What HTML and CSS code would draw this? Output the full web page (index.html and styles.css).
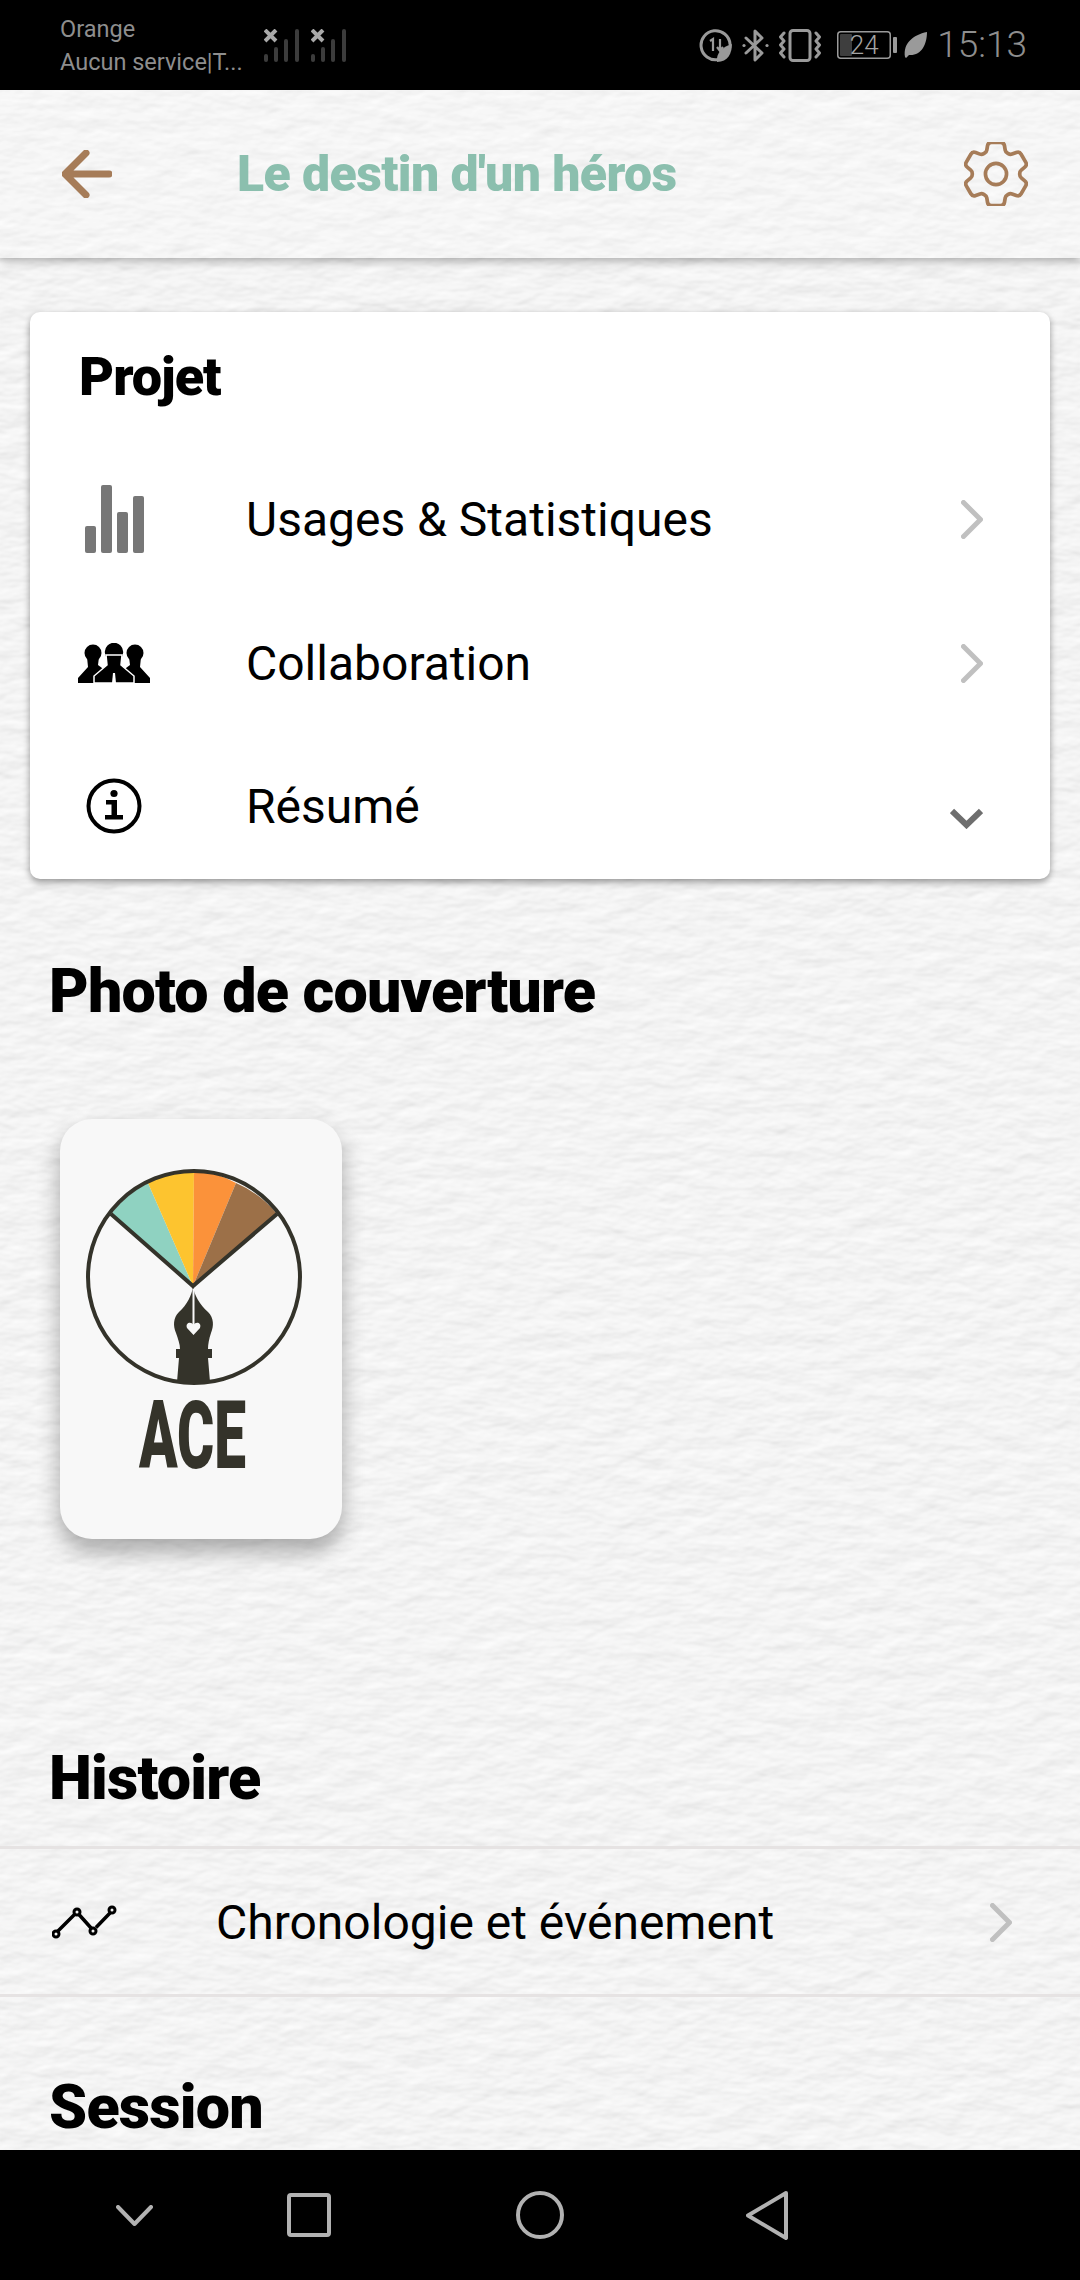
FILE: index.html
```html
<!DOCTYPE html>
<html lang="fr">
<head>
    <meta charset="UTF-8">
    <title>Le destin d'un héros</title>
    <meta name="viewport" content="width=device-width, initial-scale=1">
    <link rel="stylesheet" href="styles.css">
</head>
<body>
    <div class="status-bar">
        <div class="carrier">
            <div>Orange</div>
            <div>Aucun service|T...</div>
        </div>
        <svg class="signal" viewBox="0 0 36 33">
            <g class="signal-bars">
                <rect x="0" y="25" width="4" height="8" rx="2"/><rect x="10" y="18" width="4" height="15" rx="2"/>
                <rect x="20" y="10" width="4" height="23" rx="2"/><rect x="31" y="0" width="4" height="33" rx="2"/>
            </g>
            <path class="signal-x" d="M1 1 L12 12 M12 1 L1 12"/>
        </svg>
        <svg class="signal" viewBox="0 0 36 33">
            <g class="signal-bars">
                <rect x="0" y="25" width="4" height="8" rx="2"/><rect x="10" y="18" width="4" height="15" rx="2"/>
                <rect x="20" y="10" width="4" height="23" rx="2"/><rect x="31" y="0" width="4" height="33" rx="2"/>
            </g>
            <path class="signal-x" d="M1 1 L12 12 M12 1 L1 12"/>
        </svg>
        <div class="status-right">
            <svg class="st-data" viewBox="0 0 33 33">
                <path class="st-line" d="M19 30.5 A14.5 14.5 0 1 1 31 15"/>
                <path class="st-thin" d="M11 12 L14 10 V22 M21 10 V21 M18 18 L21 22 L24 18"/>
                <path class="st-fill" d="M33 15 C33 24 29 33 18 33 C17 24 23 18 33 15 Z"/>
            </svg>
            <svg class="st-bt" viewBox="0 0 27 33">
                <path class="st-line" d="M4 9 L20 24 L13 31 V2 L20 9 L4 24"/>
                <circle class="st-fill" cx="2" cy="16.5" r="1.6"/>
                <circle class="st-fill" cx="25" cy="16.5" r="1.6"/>
            </svg>
            <svg class="st-vibrate" viewBox="0 0 42 33">
                <rect class="st-line" x="11" y="1.5" width="20" height="30" rx="3"/>
                <path class="st-line" d="M5 4 L1.5 8 L5 12 L1.5 16 L5 20 L1.5 24 L5 28"/>
                <path class="st-line" d="M37 4 L40.5 8 L37 12 L40.5 16 L37 20 L40.5 24 L37 28"/>
            </svg>
            <div class="st-battery">
                <svg class="st-battery-svg" viewBox="0 0 90 28">
                    <rect class="st-batt-body" x="0.75" y="0.75" width="52.5" height="26.5" rx="3"/>
                    <rect class="st-batt-level" x="3" y="3" width="12" height="22" rx="1"/>
                    <rect class="st-fill" x="56" y="6" width="4" height="16" rx="1"/>
                    <path class="st-fill" d="M68 26 C66 12 76 4 90 1 C90 14 84 25 72 24 L69 27 Z"/>
                </svg>
                <span class="st-batt-text">24</span>
            </div>
            <span class="st-time">15:13</span>
        </div>
    </div>

    <main class="screen">
        <svg class="paper" width="1080" height="2060">
            <filter id="paperGrain" x="0" y="0" width="100%" height="100%">
                <feTurbulence type="fractalNoise" baseFrequency="0.03 0.06" numOctaves="3" seed="11"/>
                <feDiffuseLighting surfaceScale="1.1" diffuseConstant="1.0" lighting-color="#ffffff">
                    <feDistantLight azimuth="70" elevation="64"/>
                </feDiffuseLighting>
            </filter>
            <rect width="1080" height="2060" filter="url(#paperGrain)"/>
        </svg>

        <header class="top-bar">
            <svg class="back-arrow" viewBox="0 0 50 48">
                <path d="M47 24 H4 M24 3 L3 24 L24 45"/>
            </svg>
            <h1 class="top-title">Le destin d'un héros</h1>
            <svg class="gear" viewBox="2.9 2.9 18.2 18.2">
                <path d="M9.594 3.94c.09-.542.56-.94 1.11-.94h2.593c.55 0 1.02.398 1.11.94l.213 1.281c.063.374.313.686.645.87.074.04.147.083.22.127.325.196.72.257 1.075.124l1.217-.456a1.125 1.125 0 011.37.49l1.296 2.247a1.125 1.125 0 01-.26 1.431l-1.003.827c-.293.241-.438.613-.43.992a7.723 7.723 0 010 .255c-.008.378.137.75.43.991l1.004.827c.424.35.534.955.26 1.43l-1.298 2.247a1.125 1.125 0 01-1.369.491l-1.217-.456c-.355-.133-.75-.072-1.076.124a6.47 6.47 0 01-.22.128c-.331.183-.581.495-.644.869l-.213 1.281c-.09.543-.56.94-1.11.94h-2.594c-.55 0-1.019-.398-1.11-.94l-.213-1.281c-.062-.374-.312-.686-.644-.87a6.52 6.52 0 01-.22-.127c-.325-.196-.72-.257-1.076-.124l-1.217.456a1.125 1.125 0 01-1.369-.49l-1.297-2.247a1.125 1.125 0 01.26-1.431l1.004-.827c.292-.24.437-.613.43-.991a6.932 6.932 0 010-.255c.007-.38-.138-.751-.43-.992l-1.004-.827a1.125 1.125 0 01-.26-1.43l1.297-2.247a1.125 1.125 0 011.37-.491l1.216.456c.356.133.751.072 1.076-.124.072-.044.146-.086.22-.128.332-.183.582-.495.644-.869l.214-1.28z"/>
                <circle cx="12" cy="12" r="3"/>
            </svg>
        </header>

        <section class="card">
            <h2 class="card-title">Projet</h2>
            <div class="card-row">
                <span class="row-icon">
                    <svg class="icon-bars" viewBox="0 0 59 68">
                        <rect x="0" y="41" width="11" height="27" rx="2"/>
                        <rect x="16" y="0" width="11" height="68" rx="2"/>
                        <rect x="32" y="27" width="11" height="41" rx="2"/>
                        <rect x="48" y="11" width="11" height="57" rx="2"/>
                    </svg>
                </span>
                <span class="row-label">Usages &amp; Statistiques</span>
                <svg class="chevron" viewBox="0 0 22 39"><path d="M2.5 2.5 L19.5 19.5 L2.5 36.5"/></svg>
            </div>
            <div class="card-row">
                <span class="row-icon">
                    <svg class="icon-people" viewBox="0 0 72 40">
                        <circle cx="15" cy="10" r="8.5"/>
                        <path d="M9 14 H21 L20 22 L28 28 L20 40 H0 V35 L10 24 Z"/>
                        <circle cx="57" cy="10" r="8.5"/>
                        <path d="M51 14 H63 L62 24 L72 35 V40 H52 L44 28 L52 22 Z"/>
                        <circle class="people-front" cx="36" cy="9" r="10"/>
                        <path class="people-front" d="M28 12 H44 L43 22 L56 33 V40 H16 V33 L29 22 Z"/>
                        <path class="people-tie" d="M35 30 H37 L38 40 H34 Z"/>
                    </svg>
                </span>
                <span class="row-label">Collaboration</span>
                <svg class="chevron" viewBox="0 0 22 39"><path d="M2.5 2.5 L19.5 19.5 L2.5 36.5"/></svg>
            </div>
            <div class="card-row card-row-open">
                <span class="row-icon">
                    <svg class="icon-info" viewBox="0 0 56 56">
                        <circle class="info-ring" cx="28" cy="28" r="25.5"/>
                        <circle cx="28" cy="15.5" r="3.6"/>
                        <path d="M20 22 H31 V37 H37 V41.5 H19 V37 H25.5 V26.5 H20 Z"/>
                    </svg>
                </span>
                <span class="row-label">Résumé</span>
                <svg class="chevron-down" viewBox="0 0 33 21"><path d="M2 3 L16.5 17 L31 3"/></svg>
            </div>
        </section>

        <h2 class="section-title cover-title">Photo de couverture</h2>

        <div class="cover">
            <svg class="cover-logo" viewBox="0 0 282 420">
                <path class="fan-teal" d="M133 167 L51 95 A107 107 0 0 1 88 64 Z"/>
                <path class="fan-yellow" d="M133 167 L88 64 A107 107 0 0 1 134 51 Z"/>
                <path class="fan-orange" d="M133 167 L134 51 A107 107 0 0 1 176 64 Z"/>
                <path class="fan-brown" d="M133 167 L176 64 A107 107 0 0 1 217 95 Z"/>
                <path class="logo-line" d="M51 95 L133 167 L217 95"/>
                <circle class="logo-line" cx="134" cy="158" r="106"/>
                <path class="logo-ink" d="M133 167 C134 176 140 186 148 193 C154 199 154 207 151 214 C149 220 148 225 148 230 H152 V239 H148 L150 263 H117 L119 239 H116 V230 H120 C120 225 118 220 116 214 C113 207 113 199 119 193 C127 186 132 176 133 167 Z"/>
                <path class="logo-slit" d="M133.5 170 V208"/>
                <path class="logo-heart" d="M133.5 216 L127 209 C125 204 131 202 133.5 206 C136 202 142 204 140 209 Z"/>
                <text class="logo-text" x="79" y="349" textLength="107" lengthAdjust="spacingAndGlyphs">ACE</text>
            </svg>
        </div>

        <h2 class="section-title history-title">Histoire</h2>
        <div class="list-row">
            <svg class="icon-trend" viewBox="0 0 65 34">
                <path d="M5.5 26.5 L23 9 M27 9.5 L39.5 23.5 M44 22.5 L58 8"/>
                <circle cx="4" cy="29" r="3"/><circle cx="25" cy="7" r="3"/>
                <circle cx="41" cy="26" r="3"/><circle cx="60" cy="5" r="3"/>
            </svg>
            <span class="list-label">Chronologie et événement</span>
            <svg class="chevron" viewBox="0 0 22 39"><path d="M2.5 2.5 L19.5 19.5 L2.5 36.5"/></svg>
        </div>

        <h2 class="section-title session-title">Session</h2>
    </main>

    <nav class="nav-bar">
        <svg class="nav-down" viewBox="0 0 37 21"><path d="M2 2 L18.5 19 L35 2"/></svg>
        <svg class="nav-square" viewBox="0 0 44 44"><rect x="2" y="2" width="40" height="40" rx="2"/></svg>
        <svg class="nav-circle" viewBox="0 0 48 48"><circle cx="24" cy="24" r="22"/></svg>
        <svg class="nav-back" viewBox="0 0 42 49"><path d="M40 2 L2 24.5 L40 47 Z"/></svg>
    </nav>
</body>
</html>
```

FILE: styles.css
```css
* { box-sizing: border-box; }
html, body { margin: 0; padding: 0; }
body { width: 1080px; height: 2280px; overflow: hidden; display: flex; flex-direction: column; font-family: Roboto, "Liberation Sans", sans-serif; background: #000; }

/* status bar */
.status-bar { height: 90px; flex: none; background: #000; display: flex; align-items: center; padding: 0 53px 0 60px; color: #8e8e8e; }
.carrier { font-size: 23.5px; line-height: 33px; width: 193px; margin-right: 11px; white-space: nowrap; padding-top: 2px; }
.signal { width: 36px; height: 33px; margin-right: 11px; }
.signal-bars rect { fill: #3c3c3c; }
.signal-x { fill: none; stroke: #a9a9a9; stroke-width: 4; }
.status-right { margin-left: auto; display: flex; align-items: center; gap: 10px; }
.st-data { width: 33px; height: 33px; }
.st-bt { width: 27px; height: 33px; }
.st-vibrate { width: 42px; height: 33px; }
.st-line { fill: none; stroke: #9a9a9a; stroke-width: 3; stroke-linejoin: round; stroke-linecap: round; }
.st-thin { fill: none; stroke: #9a9a9a; stroke-width: 2.2; }
.st-fill { fill: #9a9a9a; }
.st-battery { width: 90px; height: 28px; margin-left: 6px; position: relative; }
.st-battery-svg { width: 90px; height: 28px; display: block; }
.st-batt-body { fill: none; stroke: #9a9a9a; stroke-width: 1.5; }
.st-batt-level { fill: #3e3e3e; }
.st-batt-text { position: absolute; left: 0; top: 0; width: 54px; text-align: center; font-size: 26px; line-height: 28px; color: #a4a4a4; font-weight: 300; }
.st-time { font-size: 37px; color: #8e8e8e; font-weight: 300; line-height: 40px; }

/* main area, sits on the paper texture */
.screen { flex: 1; position: relative; overflow: hidden; background: #f3f3f3; }
.screen > * { position: relative; }
.screen > .paper { position: absolute; left: 0; top: 0; display: block; }

.top-bar { height: 168px; display: flex; align-items: center; padding: 0 52px 0 62px; background: rgba(255, 255, 255, 0.2); box-shadow: 0 3px 9px rgba(0, 0, 0, 0.3); }
.back-arrow { width: 50px; height: 48px; margin-right: 125px; }
.back-arrow path { fill: none; stroke: #a67c58; stroke-width: 7; stroke-linecap: round; stroke-linejoin: round; }
.top-title { margin: 0; font-size: 50px; font-weight: 900; color: #8bbfae; letter-spacing: -0.6px; line-height: 56px; }
.gear { width: 64px; height: 64px; margin-left: auto; }
.gear path, .gear circle { fill: none; stroke: #a67c58; stroke-width: 1.05; }

/* project card */
.card { margin: 54px 30px 0; height: 567px; background: #fff; border-radius: 10px; box-shadow: 0 3px 7px rgba(0, 0, 0, 0.4); }
.card-title { margin: 0; height: 134px; padding: 40px 0 0 49px; font-size: 54px; font-weight: 900; line-height: 50px; color: #000; letter-spacing: -1px; }
.card-row { height: 144px; display: flex; align-items: center; padding: 2px 67px 0 48px; }
.card-row-open { padding-top: 0; }
.row-icon { width: 72px; display: flex; justify-content: center; flex: none; margin-right: 96px; }
.row-label { font-size: 48px; color: #000; }
.icon-bars { width: 59px; height: 68px; }
.icon-bars rect { fill: #777; }
.icon-people { width: 72px; height: 40px; }
.icon-people path, .icon-people circle { fill: #000; }
.icon-people .people-front { stroke: #fff; stroke-width: 1.5; }
.icon-people .people-tie { fill: #fff; }
.icon-info { width: 56px; height: 56px; }
.icon-info .info-ring { fill: none; stroke: #000; stroke-width: 4; }
.chevron { width: 22px; height: 39px; margin-left: auto; flex: none; }
.chevron path { fill: none; stroke: #c0c0c0; stroke-width: 5; stroke-linecap: round; stroke-linejoin: round; }
.chevron-down { width: 33px; height: 21px; margin-left: auto; margin-top: 24px; flex: none; }
.chevron-down path { fill: none; stroke: #6e6e6e; stroke-width: 6; }

/* section titles */
.section-title { margin: 0 0 0 49px; font-size: 61px; font-weight: 900; line-height: 64px; color: #000; letter-spacing: -0.8px; }
.cover-title { margin-top: 80px; }
.history-title { margin-top: 207px; }
.session-title { margin-top: 78px; }

/* cover picture */
.cover { width: 282px; height: 420px; margin: 96px 0 0 60px; background: #f8f8f8; border-radius: 32px; box-shadow: 0 12px 22px rgba(0, 0, 0, 0.32); }
.cover-logo { width: 282px; height: 420px; display: block; }
.fan-teal { fill: #8fd2c1; }
.fan-yellow { fill: #fdc42f; }
.fan-orange { fill: #fb923a; }
.fan-brown { fill: #9c7048; }
.logo-line { fill: none; stroke: #34332a; stroke-width: 4; }
.logo-ink { fill: #34332a; }
.logo-slit { fill: none; stroke: #f8f8f8; stroke-width: 2; }
.logo-heart { fill: #f8f8f8; }
.logo-text { font-family: Roboto, sans-serif; font-weight: 900; font-size: 94px; fill: #34332a; }

/* chronology row */
.list-row { height: 151px; margin-top: 36px; display: flex; align-items: center; padding: 2px 68px 0 52px; border-top: 3px solid #e6e3e3; border-bottom: 3px solid #e6e3e3; }
.icon-trend { width: 65px; height: 34px; margin-right: 99px; flex: none; margin-top: -2px; }
.icon-trend path { fill: none; stroke: #000; stroke-width: 3.5; }
.icon-trend circle { fill: none; stroke: #000; stroke-width: 3; }
.list-label { font-size: 48px; color: #000; }

/* navigation bar */
.nav-bar { height: 130px; flex: none; background: #000; position: relative; display: flex; align-items: center; padding-left: 116px; }
.nav-bar path, .nav-bar rect, .nav-bar circle { fill: none; stroke: #b2b2b2; stroke-width: 4; stroke-linejoin: round; stroke-linecap: round; }
.nav-down { width: 37px; height: 21px; margin-right: 134px; }
.nav-square { width: 44px; height: 44px; margin-right: 185px; }
.nav-circle { width: 48px; height: 48px; margin-right: 185px; }
.nav-back { width: 42px; height: 49px; margin-left: -3px; }
```
